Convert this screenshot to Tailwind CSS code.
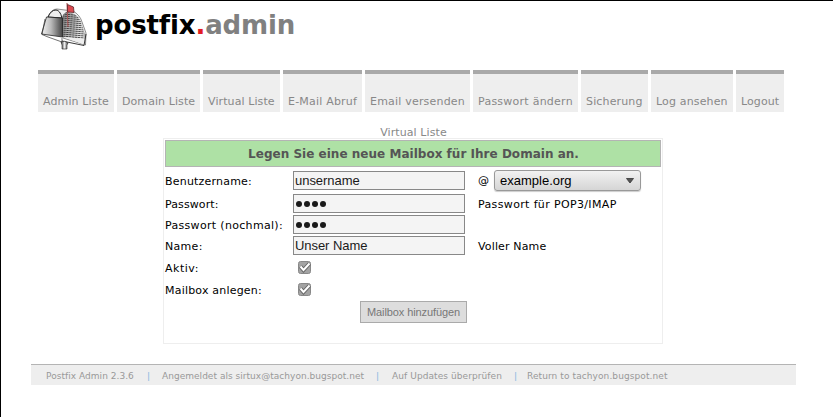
<!DOCTYPE html>
<html lang="de">
<head>
<meta charset="utf-8">
<title>Postfix Admin</title>
<script src="https://cdn.jsdelivr.net/npm/@tailwindcss/browser@4"></script>
</head>
<body class="h-[417px] w-[833px] overflow-hidden border-t border-l border-black bg-white font-['DejaVu_Sans',sans-serif] text-[11px] text-black">
<header class="flex h-[69px] pl-[39px]">
  <svg class="h-[50px] w-[48px] shrink-0" viewBox="40 1 48 50" fill="none">
    <defs>
      <linearGradient id="door" x1="0" x2="1"><stop stop-color="#f4f4f4"/><stop offset=".45" stop-color="#bbb"/><stop offset="1" stop-color="#444"/></linearGradient>
      <linearGradient id="side" x1="0" x2="1" y2=".3"><stop stop-color="#888"/><stop offset=".5" stop-color="#bbb"/><stop offset="1" stop-color="#eee"/></linearGradient>
      <linearGradient id="post" x1="0" x2="1"><stop stop-color="#333"/><stop offset=".5" stop-color="#eee"/><stop offset="1" stop-color="#444"/></linearGradient>
      <pattern id="ribs" width="3" height="2" patternUnits="userSpaceOnUse" patternTransform="rotate(5)"><path d="M0 .5H2.5" stroke="#222" stroke-width=".8"/></pattern>
    </defs>
    <path d="M48 17Q51 9 57 9L73 11Q80 15 82 22L86 33 85.500 45 63 38 62 18Z" fill="#f2f2f2" stroke="#444" stroke-width=".6"/>
    <path d="M62 18Q60 10 56 10 51 10 48 17Z" fill="#eee" stroke="#111" stroke-width=".9"/>
    <path d="M62 18Q63 13 67 12L74 14Q80 17 82 25L85 34 84.500 39 63 37Z" fill="url(#side)"/>
    <path d="M62 18Q63 13 67 12L74 14Q80 17 82 25L85 34 84.500 39 63 37Z" fill="url(#ribs)"/>
    <path d="M63 37L85 39V45Z" fill="#eee"/>
    <path d="M46.500 17L62.500 18V37L41.500 34Z" fill="url(#door)" stroke="#222" stroke-width=".8"/>
    <path d="M45 19L42 34.500 48 37 62 42V38" stroke="#333" stroke-width=".7"/>
    <path d="M62 41L84 45.500 86 34" stroke="#222" stroke-width=".9"/>
    <path d="M61 42Q65 40 68 43L67 45V49H62V45Z" fill="url(#post)" stroke="#222" stroke-width=".6"/>
    <path d="M67 3L68 27" stroke="#a55" stroke-width="1.1"/>
    <path d="M67.500 4.500L73.500 7 74 12.500 67.500 12Z" fill="#db4a50" stroke="#5b2529" stroke-width=".8"/>
  </svg>
  <h1 class="ml-[7px] mt-[7px] text-[26px] leading-[34px] font-bold tracking-[-0.14px] whitespace-nowrap">postfix<span class="text-[#e31b23]">.</span><span class="text-[#808080]">admin</span></h1>
</header>

<nav class="ml-[37px] flex gap-[3px] text-[#888] leading-[13px] whitespace-nowrap *:h-[42px] *:border-t-4 *:border-[#a9a9a9] *:bg-[#eee] *:pl-[5px] *:pt-[21px]">
  <a class="w-[76px] tracking-[0.13px]">Admin Liste</a>
  <a class="w-[83px] tracking-[0.08px]">Domain Liste</a>
  <a class="w-[77px] tracking-[0.1px]">Virtual Liste</a>
  <a class="w-[79px] tracking-[0.2px]">E-Mail Abruf</a>
  <a class="w-[105px] tracking-[0.2px]">Email versenden</a>
  <a class="w-[105px] tracking-[0.25px]">Passwort ändern</a>
  <a class="w-[67px] tracking-[0.15px]">Sicherung</a>
  <a class="w-[82px] tracking-[0.15px]">Log ansehen</a>
  <a class="w-[48px] tracking-[0.1px]">Logout</a>
</nav>

<main class="ml-[162px] mt-[14px] w-[500px]">
  <div class="h-3 pl-px text-center leading-[13px] tracking-[0.1px] text-[#888]">Virtual Liste</div>
  <form class="h-[206px] border border-[#eee] px-px pt-px">
    <h2 class="h-[27px] w-[496px] border border-[#b4b4b4] bg-[#aee1a5] pl-px text-center text-[12px] leading-[26px] font-bold tracking-[0.02px] text-[#555]">Legen Sie eine neue Mailbox für Ihre Domain an.</h2>
    <div class="grid grid-cols-[128px_185px_1fr] grid-rows-[27px_20px_22px_20px_23px_21px] items-center whitespace-nowrap">
      <label class="pt-[3px] tracking-[0.2px]">Benutzername:</label>
      <div class="h-[19px] w-[172px] border border-[#888] bg-[#f4f4f4] pl-px font-['Liberation_Sans',sans-serif] text-[13px] leading-[17px] tracking-[-0.04px] text-[#1a1a1a]">unsername</div>
      <div class="flex items-center"><span class="pt-[2px]">@</span>
        <div class="ml-[5px] flex h-[21px] w-[147px] items-center justify-between rounded-[3px] border border-[#999] bg-linear-to-b from-[#f2f2f2] to-[#d5d5d5] pr-[6px] pl-[5px] font-['Liberation_Sans',sans-serif] text-[13px] shadow-[0_1px_1px_#ccc]"><span>example.org</span>
          <svg class="mt-px h-[6px] w-[8px]" viewBox="0 0 8 6"><path d="M.5.5H7.500L4 5Z" fill="#555" stroke="#333" stroke-width=".8"/></svg></div>
      </div>

      <label class="pt-[2px] tracking-[0.1px]">Passwort:</label>
      <div class="mb-[2px] flex h-[19px] w-[172px] items-center border border-[#888] bg-[#f4f4f4] pt-[2px] pl-[2px]"><svg class="h-[6px] w-[30px]" viewBox="0 0 30 6" fill="#1a1a1a"><circle cx="3" cy="3" r="3"/><circle cx="11" cy="3" r="3"/><circle cx="19" cy="3" r="3"/><circle cx="27" cy="3" r="3"/></svg></div>
      <span class="pt-[2px] tracking-[0.36px]">Passwort für POP3/IMAP</span>

      <label class="pt-[2px] tracking-[0.32px]">Passwort (nochmal):</label>
      <div class="mb-[2px] flex h-[19px] w-[172px] items-center border border-[#888] bg-[#f4f4f4] pt-[2px] pl-[2px]"><svg class="h-[6px] w-[30px]" viewBox="0 0 30 6" fill="#1a1a1a"><circle cx="3" cy="3" r="3"/><circle cx="11" cy="3" r="3"/><circle cx="19" cy="3" r="3"/><circle cx="27" cy="3" r="3"/></svg></div>
      <span></span>

      <label class="pt-[2px] tracking-[0.3px]">Name:</label>
      <div class="mb-[2px] h-[19px] w-[172px] border border-[#888] bg-[#f4f4f4] pl-px font-['Liberation_Sans',sans-serif] text-[13px] leading-[17px] tracking-[-0.06px] text-[#1a1a1a]">Unser Name</div>
      <span class="pt-[2px] tracking-[0.15px]">Voller Name</span>

      <label class="pt-[3px] tracking-[0.5px]">Aktiv:</label>
      <svg class="ml-[5px] h-[13px] w-[13px]" viewBox="0 0 13 13"><rect x=".5" y=".5" width="12" height="12" rx="2" fill="#a3a3a3" stroke="#888"/><path d="M2.500 5.500L5.500 9 11.500 2.500" fill="none" stroke="#666" stroke-width="4"/><path d="M2.500 5.500L5.500 9 11.500 2.500" fill="none" stroke="#fff" stroke-width="2"/></svg>
      <span></span>

      <label class="pt-[3px] tracking-[0.2px]">Mailbox anlegen:</label>
      <svg class="ml-[5px] h-[13px] w-[13px]" viewBox="0 0 13 13"><rect x=".5" y=".5" width="12" height="12" rx="2" fill="#a3a3a3" stroke="#888"/><path d="M2.500 5.500L5.500 9 11.500 2.500" fill="none" stroke="#666" stroke-width="4"/><path d="M2.500 5.500L5.500 9 11.500 2.500" fill="none" stroke="#fff" stroke-width="2"/></svg>
      <span></span>
    </div>
    <button type="button" class="ml-[195px] mt-px block h-[22px] w-[107px] border border-[#aaa] bg-[#ddd] font-['Liberation_Sans',sans-serif] text-[11px] leading-[20px] tracking-[-0.1px] whitespace-nowrap text-[#777]">Mailbox hinzufügen</button>
  </form>
</main>

<footer class="mt-5 ml-[30px] flex h-[21px] w-[765px] border-t border-[#b4b4b4] bg-[#eee] pl-[15px] text-[9px] leading-[23px] whitespace-nowrap text-[#999]">
  <span class="w-[101px] tracking-[0.04px]">Postfix Admin 2.3.6</span><span class="w-[15px] text-[#88b8e0]">|</span>
  <span class="w-[214px] tracking-[0.03px]">Angemeldet als sirtux@tachyon.bugspot.net</span><span class="w-[16px] text-[#88b8e0]">|</span>
  <span class="w-[122px] tracking-[0.08px]">Auf Updates überprüfen</span><span class="w-[13px] text-[#88b8e0]">|</span>
  <span class="tracking-[0.09px]">Return to tachyon.bugspot.net</span>
</footer>
</body>
</html>
